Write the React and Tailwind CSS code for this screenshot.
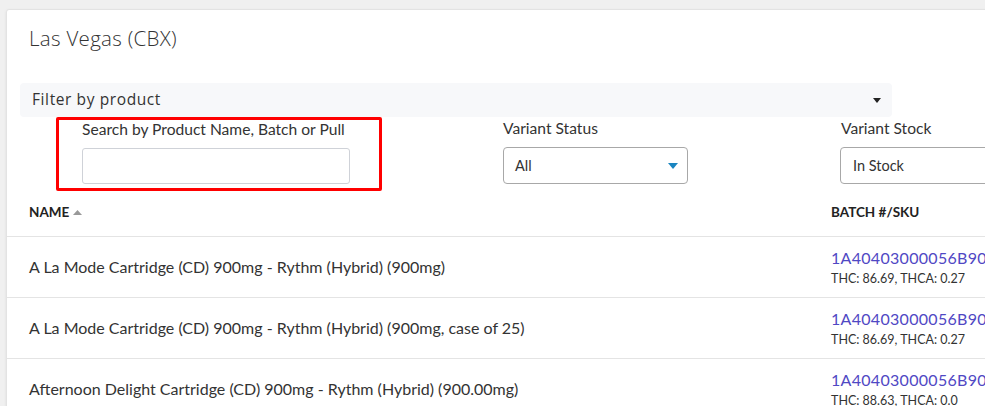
import React from 'react';

const rows = [
  { name: 'A La Mode Cartridge (CD) 900mg - Rythm (Hybrid) (900mg)', batch: '1A40403000056B9000', thc: 'THC: 86.69, THCA: 0.27' },
  { name: 'A La Mode Cartridge (CD) 900mg - Rythm (Hybrid) (900mg, case of 25)', batch: '1A40403000056B9000', thc: 'THC: 86.69, THCA: 0.27' },
  { name: 'Afternoon Delight Cartridge (CD) 900mg - Rythm (Hybrid) (900.00mg)', batch: '1A40403000056B9000', thc: 'THC: 88.63, THCA: 0.0' },
];

const Caret = ({ className }) => (
  <svg width="10" height="6" viewBox="0 0 10 6" className={className}>
    <path d="M0 0 L10 0 L5 6 Z" fill="currentColor" />
  </svg>
);

export default function App() {
  return (
    <div className="w-[985px] h-[406px] overflow-hidden bg-[#f0f0f0] pt-[9px] pl-[6px]" style={{ fontFamily: 'Lato, "Liberation Sans", sans-serif' }}>
      <div className="w-[1000px] h-[420px] bg-white border border-[#e3e3e3] rounded-[3px] shadow-[0_1px_3px_rgba(0,0,0,0.08)]">
        {/* header */}
        <div className="pt-[13px] pl-[22px] h-[73px]">
          <h2 className="text-[20.5px] text-[#333] tracking-[0.3px]" style={{ fontFamily: '"Open Sans", "Noto Sans", sans-serif', fontWeight: 300 }}>
            Las Vegas (CBX)
          </h2>
        </div>

        {/* filter by product */}
        <div className="ml-[13px] w-[872px] h-[34px] bg-[#f7f8fa] rounded-[4px] flex items-center justify-between pl-[12px] pr-[11px]">
          <span className="text-[15.5px] text-[#333] tracking-[0.6px]" style={{ fontFamily: '"Open Sans", "Noto Sans", sans-serif' }}>Filter by product</span>
          <Caret className="text-[#222] w-[8px] h-[5px]" />
        </div>

        {/* filters */}
        <div className="flex items-start">
          <div className="shrink-0 ml-[49px] w-[326px] h-[74px] border-[3px] border-[#ff0000] rounded-[2px] pl-[23px] pr-[29px]">
            <label className="block whitespace-nowrap text-[15.6px] text-[#333] leading-[18px]">Search by Product Name, Batch or Pull</label>
            <input className="mt-[10px] block w-full h-[36px] border border-[#cfd2d8] rounded-[3px] outline-none" />
          </div>

          <div className="shrink-0 ml-[121px] pt-[2px]">
            <label className="block whitespace-nowrap text-[15.6px] text-[#333] leading-[18px]">Variant Status</label>
            <div className="mt-[10px] w-[185px] h-[37px] border border-[#a8a8a8] rounded-[4px] flex items-center justify-between pl-[11px] pr-[9px]">
              <span className="text-[14.5px] text-[#333]">All</span>
              <Caret className="text-[#1a85c0]" />
            </div>
          </div>

          <div className="shrink-0 ml-[152px] pt-[2px]">
            <label className="block whitespace-nowrap text-[15.6px] text-[#333] leading-[18px] pl-px">Variant Stock</label>
            <div className="mt-[10px] w-[185px] h-[37px] border border-[#a8a8a8] rounded-[4px] flex items-center pl-[12px]">
              <span className="text-[14.5px] text-[#333]">In Stock</span>
            </div>
          </div>
        </div>

        {/* table */}
        <div>
          <div className="h-[46px] flex items-center border-b border-[#e4e4e4] pl-[22px] pb-[3px]">
            <div className="w-[802px] shrink-0 flex items-center gap-[4px] text-[13.5px] font-bold text-[#222]">
              NAME
              <svg width="9" height="5" viewBox="0 0 9 5"><path d="M0 5 L4.5 0 L9 5 Z" fill="#999" /></svg>
            </div>
            <div className="text-[13.5px] font-bold text-[#222] whitespace-nowrap">BATCH #/SKU</div>
          </div>
          {rows.map((r, i) => (
            <div key={i} className="h-[61px] flex items-center border-b border-[#e4e4e4] pl-[22px]">
              <div className="w-[802px] shrink-0 text-[16px] text-[#333]">{r.name}</div>
              <div className="flex flex-col whitespace-nowrap">
                <span className="text-[16px] text-[#5048c4] leading-[20px] tracking-[0.3px]">{r.batch}</span>
                <span className="text-[12.5px] text-[#333] leading-[16px] mt-[3px]">{r.thc}</span>
              </div>
            </div>
          ))}
        </div>
      </div>
    </div>
  );
}
